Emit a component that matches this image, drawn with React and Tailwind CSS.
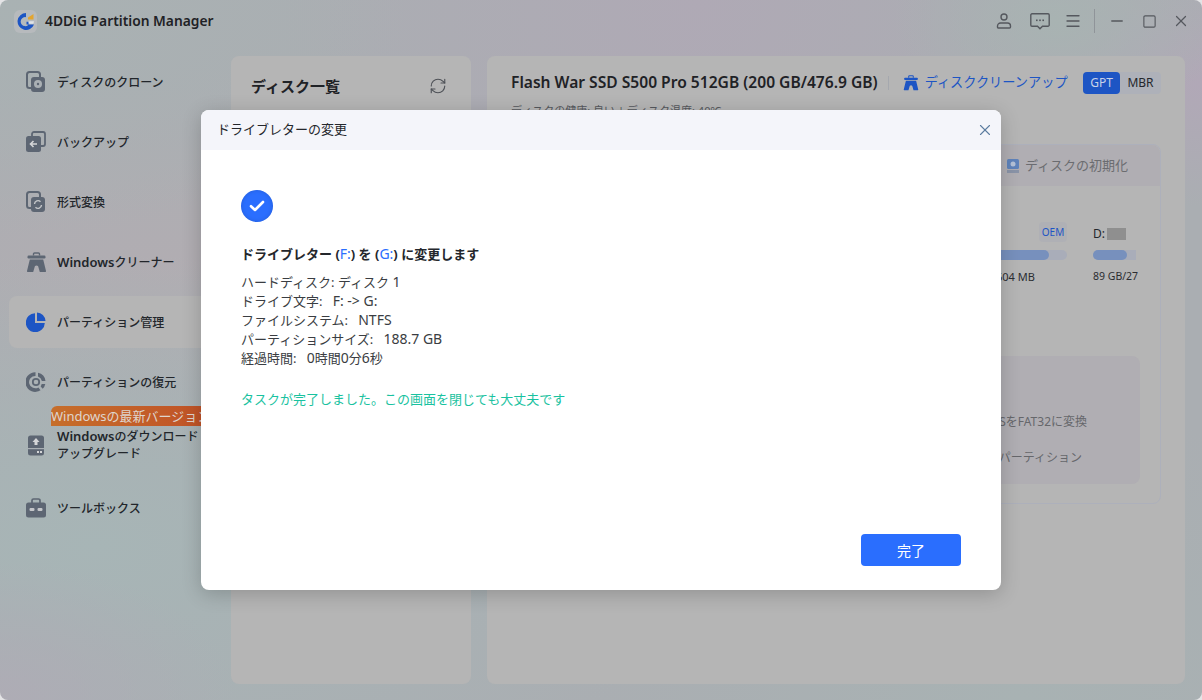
import React from "react";
import { Menu, Minus, Square, X, RefreshCw } from "lucide-react";

const fontCls = "[font-family:'Noto_Sans','Noto_Sans_CJK_JP',sans-serif]";

function CloneIcon() {
  return (
    <svg width="20" height="22" viewBox="0 0 20 22" fill="none">
      <rect x="1" y="1" width="13" height="16" rx="2.5" stroke="#5d6673" strokeWidth="2" />
      <rect x="5" y="6" width="14" height="15" rx="3" fill="#5d6673" />
      <circle cx="12" cy="13" r="4" fill="#aab0b4" />
      <circle cx="12" cy="13" r="1.2" fill="#5d6673" />
    </svg>
  );
}

function BackupIcon() {
  return (
    <svg width="20" height="22" viewBox="0 0 20 22" fill="none">
      <path d="M6 5V3a2 2 0 0 1 2-2h9a2 2 0 0 1 2 2v10a2 2 0 0 1-2 2h-2" stroke="#5d6673" strokeWidth="1.8" />
      <rect x="0" y="5" width="15" height="16" rx="2.5" fill="#5d6673" />
      <path d="M11 13H5M7.5 10 4.5 13l3 3" stroke="#d5d6d8" strokeWidth="1.6" fill="none" />
    </svg>
  );
}

function ConvertIcon() {
  return (
    <svg width="20" height="22" viewBox="0 0 20 22" fill="none">
      <rect x="1" y="1" width="13" height="16" rx="2.5" stroke="#5d6673" strokeWidth="2" />
      <rect x="5" y="6" width="14" height="15" rx="3" fill="#5d6673" />
      <path d="M8.5 13a3.5 3.5 0 0 1 6-2.3M15.5 14a3.5 3.5 0 0 1-6 2.3" stroke="#c5c7ca" strokeWidth="1.4" fill="none" />
    </svg>
  );
}

function CleanerIcon({ color = "#5d6673", size = 21 }) {
  return (
    <svg width={size} height={size} viewBox="0 0 21 21" fill="none">
      <path d="M7.5 3.5V2a1 1 0 0 1 1-1h4a1 1 0 0 1 1 1v1.5" stroke={color} strokeWidth="1.4" />
      <rect x="1.5" y="3.5" width="18" height="3" rx="1.2" fill={color} />
      <path d="M3.8 7.5h13.4L20 19a.8.8 0 0 1-.8 1h-5.4l-1.3-4.5a2 2 0 0 0-4 0L7.2 20H1.8a.8.8 0 0 1-.8-1z" fill={color} />
    </svg>
  );
}

function PieIcon() {
  return (
    <svg width="20" height="20" viewBox="0 0 20 20">
      <path d="M9 1.2V11h9.8A9.5 9.5 0 1 1 9 1.2z" fill="#1d55c4" />
      <path d="M11 0.5a9 9 0 0 1 8.5 8.5H11z" fill="#1d55c4" />
    </svg>
  );
}

function RecoverIcon() {
  return (
    <svg width="20" height="20" viewBox="0 0 20 20" fill="none">
      <path d="M12 .8A9.6 9.6 0 0 1 19.5 9h-3.6A6 6 0 0 0 12 4.5zM19.3 12a9.6 9.6 0 0 1-2.6 4.8l-2-2.3 1-2.5zM14.5 18.3A9.8 9.8 0 1 1 9.5.3v3.6a6.2 6.2 0 1 0 3 11.5z" fill="#5d6673" />
      <circle cx="10" cy="10" r="3.2" stroke="#5d6673" strokeWidth="1.8" />
    </svg>
  );
}

function DownloadIcon() {
  return (
    <svg width="18" height="21" viewBox="0 0 18 21" fill="none">
      <rect x="1" y="0.5" width="16" height="20" rx="2.5" fill="#5d6673" />
      <path d="M9 3 5.5 7H7.5v3h3V7h2z" fill="#d5d6d8" />
      <rect x="1" y="13" width="16" height="1.2" fill="#aab0b4" />
      <rect x="10" y="16" width="2" height="2" fill="#d5d6d8" />
      <rect x="13" y="16" width="2" height="2" fill="#d5d6d8" />
    </svg>
  );
}

function ToolboxIcon() {
  return (
    <svg width="20" height="20" viewBox="0 0 20 20" fill="none">
      <path d="M6 5V2.5A1.5 1.5 0 0 1 7.5 1h5A1.5 1.5 0 0 1 14 2.5V5" stroke="#5d6673" strokeWidth="1.7" />
      <rect y="4.5" width="20" height="15" rx="2.5" fill="#5d6673" />
      <rect x="3.5" y="10" width="5" height="3" rx="1.2" fill="#c5c7ca" />
      <rect x="11.5" y="10" width="5" height="3" rx="1.2" fill="#c5c7ca" />
    </svg>
  );
}

function UserIcon() {
  return (
    <svg width="16" height="16" viewBox="0 0 16 16" fill="none" stroke="currentColor" strokeWidth="1.4">
      <circle cx="8" cy="4" r="3" />
      <path d="M4.5 10h7a3 3 0 0 1 3 3v1a1 1 0 0 1-1 1h-11a1 1 0 0 1-1-1v-1a3 3 0 0 1 3-3z" />
    </svg>
  );
}

function ChatIcon() {
  return (
    <svg width="20" height="17" viewBox="0 0 20 17" fill="none">
      <path d="M2 .8h16a1.2 1.2 0 0 1 1.2 1.2v10a1.2 1.2 0 0 1-1.2 1.2h-5.5L10 15.8l-2.5-2.6H2A1.2 1.2 0 0 1 .8 12V2A1.2 1.2 0 0 1 2 .8z" stroke="currentColor" strokeWidth="1.4" />
      <rect x="6" y="6.5" width="1.6" height="1.6" fill="currentColor" />
      <rect x="9.2" y="6.5" width="1.6" height="1.6" fill="currentColor" />
      <rect x="12.4" y="6.5" width="1.6" height="1.6" fill="currentColor" />
    </svg>
  );
}

function Logo() {
  return (
    <div className="w-[23px] h-[23px] rounded-md bg-[#b7babd] flex items-center justify-center">
      <svg width="19" height="19" viewBox="0 0 19 19">
        <path d="M10 1a8.5 8.5 0 1 0 8 11.5h-7.5V9.7h3.2A4.5 4.5 0 1 1 10 5.2z" fill="#1d55c4" />
        <path d="M12 5.5 17.5 2v5.5H12z" fill="#e3a52f" />
        <path d="M12.5 9.3h5.5l-.6 2.4h-4.9z" fill="#dfe3e8" />
      </svg>
    </div>
  );
}

const Win = () => <span className="text-[13px] font-semibold">Windows</span>;

const menu = [
  { id: "clone", label: "ディスクのクローン", icon: <CloneIcon /> },
  { id: "backup", label: "バックアップ", icon: <BackupIcon /> },
  { id: "convert", label: "形式変換", icon: <ConvertIcon /> },
  { id: "cleaner", label: <><Win />クリーナー</>, icon: <CleanerIcon /> },
  { id: "partition", label: "パーティション管理", icon: <PieIcon />, active: true },
  { id: "recover", label: "パーティションの復元", icon: <RecoverIcon /> },
];

function Sidebar() {
  return (
    <aside className="w-[231px] shrink-0 pl-[9px]">
      <div className="flex flex-col gap-2">
        {menu.map((item) => (
          <div
            key={item.id}
            className={`h-[52px] flex items-center rounded-l-lg rounded-r-none pl-4 ${item.active ? "bg-[#b5b5b5] -mr-2" : ""}`}
          >
            <span className="w-[32px] flex justify-center -ml-[5px] mr-[5px]">{item.icon}</span>
            <span className="pt-[2px] text-[12px] font-medium text-[#22262b]">{item.label}</span>
          </div>
        ))}
      </div>

      <div className="relative h-[52px] mt-[11px] flex items-center pl-4">
        <span className="absolute left-[42px] -top-[13px] h-[20px] w-[180px] overflow-hidden whitespace-nowrap rounded-tl-md bg-gradient-to-r from-[#c66e2b] to-[#bf4d26] text-[13px] leading-[20px] text-[#dfd5cd]">
          Windowsの最新バージョン
        </span>
        <span className="w-[32px] flex justify-center -ml-[5px] mr-[5px]">
          <DownloadIcon />
        </span>
        <span className="text-[12px] font-medium leading-[17px] text-[#22262b] whitespace-nowrap">
          <Win />のダウンロード・
          <br />
          アップグレード
        </span>
      </div>

      <div className="h-[52px] mt-[11px] flex items-center pl-4">
        <span className="w-[32px] flex justify-center -ml-[5px] mr-[5px]">
          <ToolboxIcon />
        </span>
        <span className="pt-[2px] text-[12px] font-medium text-[#22262b]">ツールボックス</span>
      </div>
    </aside>
  );
}

function DiskPanel() {
  return (
    <section className="w-[240px] shrink-0 h-[628px] rounded-lg bg-[#b5b5b5] px-5 pt-[19px]">
      <div className="flex items-center justify-between pr-[4px]">
        <h2 className="text-[15px] font-bold text-[#1f2226]">ディスク一覧</h2>
        <RefreshCw size={18} strokeWidth={1.5} className="text-[#4e5157]" />
      </div>
    </section>
  );
}

function MainPanel() {
  return (
    <section className="w-[698px] ml-4 shrink-0 h-[628px] rounded-lg bg-[#b5b5b5] pl-6 pr-6 pt-[16px] overflow-hidden">
      <div className="flex items-center h-[22px]">
        <h2 className="text-[15.6px] font-semibold text-[#1f2226] whitespace-nowrap">
          Flash War SSD S500 Pro 512GB (200 GB/476.9 GB)
        </h2>
        <span className="w-px h-[14px] bg-[#a5a8ae] ml-[10px] mr-[14px]" />
        <CleanerIcon color="#1d55c4" size={16} />
        <span className="text-[13.2px] text-[#1d55c4] ml-[6px] whitespace-nowrap">ディスククリーンアップ</span>
        <div className="ml-auto flex h-[22px] w-[78px] rounded bg-[#aeb1b9] text-[12px]">
          <span className="w-[37px] rounded bg-[#1d55c4] text-center leading-[22px] text-[#c8d2e8]">GPT</span>
          <span className="flex-1 text-center leading-[22px] text-[#24272c]">MBR</span>
        </div>
      </div>

      <p className="text-[11px] text-[#55585d] mt-[9px] h-[16px]">ディスクの健康: 良い | ディスク温度: 40℃</p>

      <div className="mt-[25px] h-[360px] rounded-lg border border-[#adb0bb]">
        <div className="h-[41px] rounded-t-lg bg-[#b0aeb3] flex items-center justify-end pr-[32px] text-[13px] text-[#6b6c70]">
          <svg width="12" height="14" viewBox="0 0 12 14" className="mr-[6px]">
            <rect width="12" height="10" rx="1.5" fill="#5f83bb" />
            <circle cx="6" cy="5" r="2.5" fill="#b5c2d8" />
            <rect y="11" width="12" height="3" fill="#8a94a8" />
          </svg>
          ディスクの初期化
        </div>

        <div className="flex justify-end gap-[26px] pr-[24px] pt-[36px]">
          <div className="w-[120px]">
            <div className="flex justify-end">
              <span className="h-[20px] w-[28px] rounded-sm bg-[#afb0b5] text-center text-[10px] leading-[20px] text-[#1d55c4]">OEM</span>
            </div>
            <div className="h-[10px] mt-[8px] rounded-full bg-[#a9adb9]">
              <div className="h-full w-[85%] rounded-full bg-[#7790bd]" />
            </div>
            <p className="text-[11px] text-[#2b2d31] mt-[9px] pl-[49px]">604 MB</p>
          </div>
          <div className="w-[43px]">
            <div className="flex items-center h-[20px] mt-[2px] text-[12px] text-[#24272c]">
              D:<span className="ml-[2px] h-[12px] w-[19px] bg-[#8f8f8f]" />
            </div>
            <div className="h-[10px] mt-[6px] rounded-l-full bg-[#a9adb9]">
              <div className="h-full w-[80%] rounded-full bg-[#7790bd]" />
            </div>
            <p className="text-[10.5px] text-[#2b2d31] mt-[9px] whitespace-nowrap">89 GB/27</p>
          </div>
        </div>

        <div className="mt-[70px] mx-[20px] h-[128px] rounded-lg bg-[#b0aeb3] flex flex-col items-end pr-[58px] pt-[57px] text-[12px] text-[#66676b]">
          <p className="-mr-[5px]">NTFSをFAT32に変換</p>
          <p className="mt-[18px]">パーティション</p>
        </div>
      </div>
    </section>
  );
}

function ResultModal() {
  return (
    <div className="absolute inset-0 flex items-center justify-center">
      <div className="w-[800px] h-[480px] rounded-lg overflow-hidden bg-white shadow-[0_4px_20px_rgba(0,0,0,0.2)] flex flex-col">
        <header className="h-[40px] bg-[#f4f5fa] flex items-center justify-between pl-4 pr-[7px] shrink-0">
          <h3 className="text-[13px] text-[#24272c]">ドライブレターの変更</h3>
          <X size={18} strokeWidth={1.5} className="text-[#5c7ca0]" />
        </header>
        <div className="flex-1 flex flex-col pl-10 pr-10 pt-10 pb-6">
          <span className="w-8 h-8 rounded-full bg-[#2a6efe] flex items-center justify-center shadow-[inset_0_0_4px_rgba(0,0,0,0.15)]">
            <svg width="16" height="12" viewBox="0 0 16 12" fill="none">
              <path d="M2 6.2 6 10l8-8" stroke="white" strokeWidth="2.6" strokeLinecap="round" strokeLinejoin="round" />
            </svg>
          </span>
          <p className="mt-[22px] h-[20px] text-[13px] font-bold leading-[20px] text-[#24272c]">
            ドライブレター (<span className="text-[14px] font-normal text-[#2a6efe]">F:</span>) を (<span className="text-[14px] font-normal text-[#2a6efe]">G:</span>) に変更します
          </p>
          <div className="mt-[8px] text-[13px] leading-[19px] text-[#3a3d42] [&>p]:h-[19px]">
            <p>ハードディスク: ディスク <span className="text-[14px]">1</span></p>
            <p>ドライブ文字:&nbsp;&nbsp;&nbsp;<span className="text-[14px]">F: -&gt; G:</span></p>
            <p>ファイルシステム:&nbsp;&nbsp;&nbsp;<span className="text-[14px]">NTFS</span></p>
            <p>パーティションサイズ:&nbsp;&nbsp;&nbsp;<span className="text-[14px]">188.7 GB</span></p>
            <p>経過時間:&nbsp;&nbsp;&nbsp;<span className="text-[14px]">0</span>時間<span className="text-[14px]">0</span>分<span className="text-[14px]">6</span>秒</p>
          </div>
          <p className="mt-[23px] text-[13px] leading-[19px] text-[#19c2a0]">タスクが完了しました。この画面を閉じても大丈夫です</p>
          <div className="mt-auto flex justify-end">
            <button className="w-[100px] h-[32px] rounded bg-[#2a6efe] text-[14px] text-white">完了</button>
          </div>
        </div>
      </div>
    </div>
  );
}

export default function App() {
  return (
    <div className="w-[1202px] h-[700px] bg-[#e4e4e6] overflow-hidden">
      <div
        className={`relative w-full h-full rounded-lg overflow-hidden text-[#24272c] ${fontCls} bg-[#aaaeb2] bg-[radial-gradient(ellipse_at_0%_100%,#aeacb5_0%,transparent_14%),radial-gradient(ellipse_at_88%_3%,#a8b3b2_0%,transparent_11%),radial-gradient(ellipse_at_100%_12%,#b1a8b7_0%,transparent_14%),radial-gradient(ellipse_at_8%_78%,#a7b5b6_0%,transparent_38%),radial-gradient(ellipse_at_0%_0%,#a9b2b3_0%,transparent_24%),radial-gradient(ellipse_at_14%_38%,#b1adb2_0%,transparent_32%),radial-gradient(ellipse_at_58%_0%,#afa9b5_0%,transparent_42%),radial-gradient(ellipse_at_85%_100%,#a8b2b3_0%,transparent_30%)]`}
      >
        {/* Title bar */}
        <header className="h-[56px] flex items-center pl-[14px] pr-[12px] pb-[14px]">
          <Logo />
          <h1 className="ml-2 text-[13.8px] font-semibold text-[#1f2226]">4DDiG Partition Manager</h1>
          <div className="ml-auto flex items-center text-[#55585e]">
            <UserIcon />
            <span className="ml-[18px]">
              <ChatIcon />
            </span>
            <Menu size={18} strokeWidth={1.7} className="ml-[14px]" />
            <span className="w-px h-[24px] bg-[#8f9499] ml-[12px]" />
            <Minus size={18} strokeWidth={1.7} className="ml-[13px]" />
            <Square size={15} strokeWidth={1.8} className="ml-[16px]" />
            <X size={18} strokeWidth={1.6} className="ml-[15px]" />
          </div>
        </header>

        <div className="flex">
          <Sidebar />
          <DiskPanel />
          <MainPanel />
        </div>

        <ResultModal />
      </div>
    </div>
  );
}
